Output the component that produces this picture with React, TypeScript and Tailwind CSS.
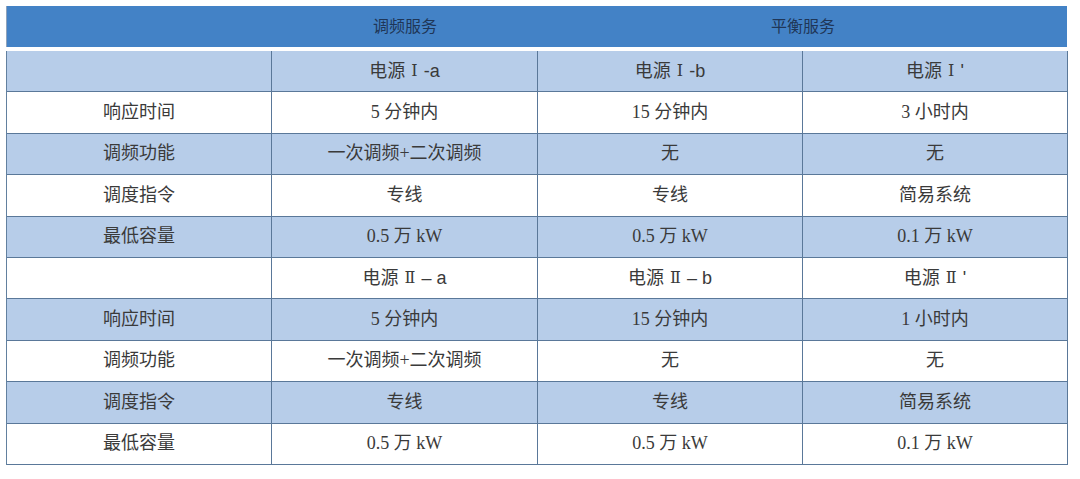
const serif = { fontFamily: '"Liberation Serif", "Noto Sans CJK SC", serif' };

type Cell = React.ReactNode;

const Sans = ({ children }: { children: React.ReactNode }) => (
  <span style={{ fontFamily: '"Liberation Sans", "Noto Sans CJK SC", sans-serif' }}>{children}</span>
);

// roman numeral with serifs, as in the source table
const Num = ({ children }: { children: React.ReactNode }) => (
  <span className="text-[16px] mx-[6px]" style={{ fontFamily: '"DejaVu Serif", "Liberation Serif", serif' }}>
    {children}
  </span>
);

const rows: { cells: Cell[]; blue: boolean }[] = [
  {
    blue: true,
    cells: [
      "",
      <>电源<Num>Ⅰ</Num><Sans>-a</Sans></>,
      <>电源<Num>Ⅰ</Num><Sans>-b</Sans></>,
      <>电源<Num>Ⅰ</Num><Sans>'</Sans></>,
    ],
  },
  { blue: false, cells: ["响应时间", "5 分钟内", "15 分钟内", "3 小时内"] },
  { blue: true, cells: ["调频功能", "一次调频+二次调频", "无", "无"] },
  { blue: false, cells: ["调度指令", "专线", "专线", "简易系统"] },
  { blue: true, cells: ["最低容量", "0.5 万 kW", "0.5 万 kW", "0.1 万 kW"] },
  {
    blue: false,
    cells: [
      "",
      <>电源<Num>Ⅱ</Num><Sans>– a</Sans></>,
      <>电源<Num>Ⅱ</Num><Sans>– b</Sans></>,
      <>电源<Num>Ⅱ</Num><Sans>'</Sans></>,
    ],
  },
  { blue: true, cells: ["响应时间", "5 分钟内", "15 分钟内", "1 小时内"] },
  { blue: false, cells: ["调频功能", "一次调频+二次调频", "无", "无"] },
  { blue: true, cells: ["调度指令", "专线", "专线", "简易系统"] },
  { blue: false, cells: ["最低容量", "0.5 万 kW", "0.5 万 kW", "0.1 万 kW"] },
];

export default function App() {
  return (
    <div className="w-[1080px] h-[479px] bg-white pt-[6px] pl-[6px] overflow-hidden" style={serif}>
      <div className="w-[1061px]">
        <div className="h-[41px] bg-[#4382c6] border-l border-[#8fa3bb] grid grid-cols-[265px_266px_530px] text-[16px] text-[#1f3657]">
          <div />
          <div className="flex items-center justify-center">调频服务</div>
          <div className="flex items-center justify-center">平衡服务</div>
        </div>
        <div className="h-[4px]" />
        <div className="grid grid-cols-[265px_266px_265px_265px] border-l border-[#62809f]">
          {rows.map((row, ri) =>
            row.cells.map((c, ci) => (
              <div
                key={`${ri}-${ci}`}
                className={`h-[41.4px] flex items-center justify-center text-[18px] text-[#3a3a3a] border-b border-r border-[#5a7899] ${
                  row.blue ? "bg-[#b7cde9]" : "bg-white"
                }`}
              >
                {c}
              </div>
            ))
          )}
        </div>
      </div>
    </div>
  );
}
